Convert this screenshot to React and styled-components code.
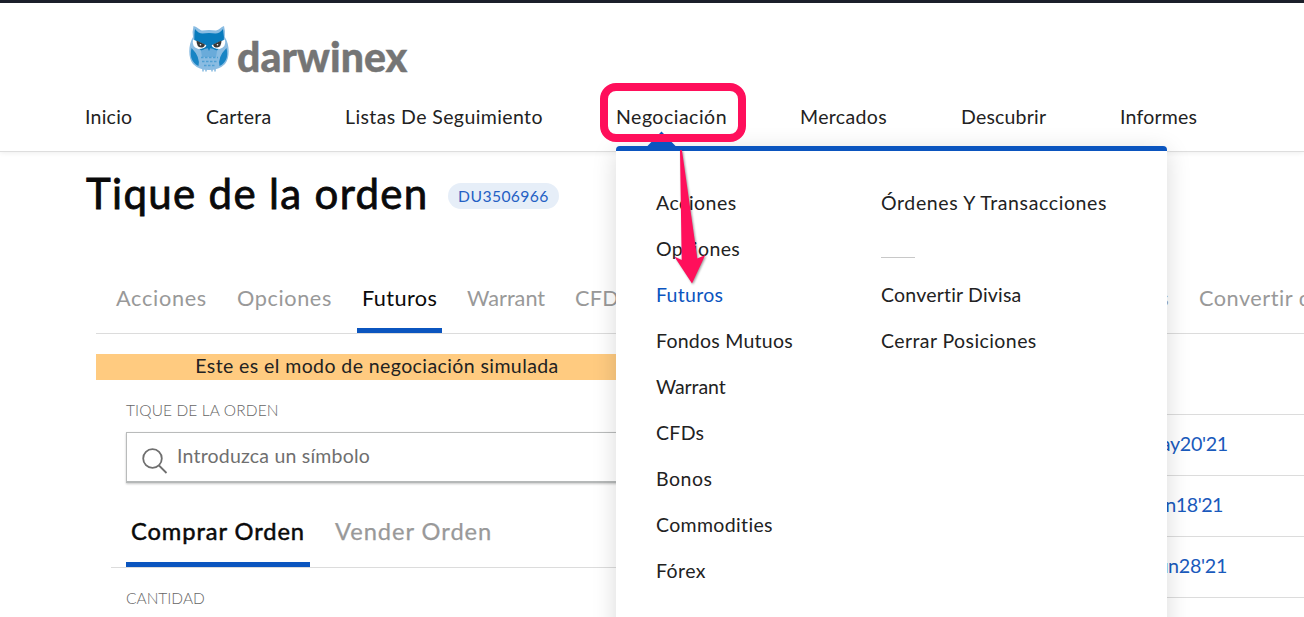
import React from "react";
import styled, { createGlobalStyle } from "styled-components";

const blue = "#0b55bf";
const pink = "#ff0f5b";

const GlobalStyle = createGlobalStyle`
  * { box-sizing: border-box; }
  html, body { margin: 0; height: 100%; overflow: hidden; background: #fff; }
  body { font-family: Lato, "Open Sans", sans-serif; color: #222; }
`;

const Page = styled.div`
  position: relative;
  width: 1304px;
  height: 617px;
  overflow: hidden;
  background: #fff;
`;

const Header = styled.header`
  height: 152px;
  border-top: 3px solid #1b1f2a;
  border-bottom: 1px solid #dedede;
  box-shadow: 0 1px 5px rgba(0, 0, 0, 0.07);
`;

const Brand = styled.div`
  display: flex;
  height: 88px;
  padding: 21px 0 0 187px;
`;

const BrandName = styled.span`
  margin: 8px 0 0 6px;
  font-size: 41px;
  line-height: 50px;
  font-weight: 900;
  letter-spacing: ${(p) => p.$ls}px;
  color: #757575;
  -webkit-text-stroke: 0.4px #757575;
`;

const Nav = styled.nav`
  display: grid;
  grid-template-columns: 121px 139px 271px 184px 161px 159px auto;
  padding-left: 85px;
`;

const NavLink = styled.a`
  font-size: 19.5px;
  line-height: 52px;
  white-space: nowrap;
  letter-spacing: ${(p) => p.$ls}px;
`;

const TitleRow = styled.div`
  display: flex;
  align-items: center;
  height: 87px;
  padding: 0 0 5px 86px;
`;

const Title = styled.h1`
  margin: 0;
  width: 362px;
  font-size: 42px;
  line-height: 50px;
  font-weight: 400;
  letter-spacing: ${(p) => p.$ls}px;
  white-space: nowrap;
  color: #0a0a0a;
  -webkit-text-stroke: 0.8px #0a0a0a;
`;

const Account = styled.span`
  width: 111px;
  height: 26px;
  margin-top: 5px;
  border-radius: 13px;
  background: #e6eef8;
  color: #2460c4;
  font-size: 15.7px;
  line-height: 26px;
  text-align: center;
  letter-spacing: ${(p) => p.$ls}px;
`;

const Tabs = styled.div`
  display: grid;
  grid-template-columns: 121px 120px 110px 108px 120px 504px auto;
  height: 95px;
  margin-left: 96px;
  padding-left: 20px;
  border-bottom: 1px solid #dcdcdc;
`;

const Tab = styled.div`
  justify-self: ${(p) => (p.$end ? "end" : "start")};
  padding: ${(p) => (p.$active ? "0 5px" : p.$end ? "0 30px 0 0" : "0")};
  height: 94px;
  border-bottom: 5px solid ${(p) => (p.$active ? blue : "transparent")};
  font-size: 21.7px;
  line-height: 118px;
  white-space: nowrap;
  letter-spacing: ${(p) => p.$ls}px;
  color: ${(p) => (p.$active ? "#0a0a0a" : "#999")};
`;

const Columns = styled.div`
  display: flex;
  padding: 20px 0 0 96px;
`;

const Ticket = styled.section`
  width: 562px;
`;

const Banner = styled.div`
  height: 26px;
  background: #ffcb80;
  font-size: 19.5px;
  line-height: 24px;
  text-align: center;
  letter-spacing: ${(p) => p.$ls}px;
`;

const Label = styled.div`
  margin-left: 30px;
  padding-top: ${(p) => p.$top}px;
  font-size: 15.5px;
  line-height: 20px;
  font-weight: 300;
  letter-spacing: ${(p) => p.$ls}px;
  color: #666;
`;

const Search = styled.div`
  display: flex;
  height: 51px;
  margin: 12px 0 0 30px;
  border: 1px solid #b9bbbb;
  border-bottom: 2px solid #b5b8b8;
  box-shadow: 0 1px 2px rgba(0, 0, 0, 0.22);
  padding: 15px 0 0 15px;
  color: #6f6f6f;
  font-size: 19.5px;
  line-height: 16px;
  letter-spacing: ${(p) => p.$ls}px;

  svg { margin-right: 9px; flex: none; }
`;

const SideTabs = styled.div`
  display: flex;
  gap: 25px;
  height: 85px;
  margin-left: 15px;
  padding-left: 15px;
  border-bottom: 1px solid #dcdcdc;
`;

const SideTab = styled.div`
  width: 184px;
  height: 84px;
  padding-left: ${(p) => (p.$active ? 5 : 0)}px;
  border-bottom: 5px solid ${(p) => (p.$active ? blue : "transparent")};
  font-size: 23.7px;
  line-height: 97px;
  white-space: nowrap;
  letter-spacing: ${(p) => p.$ls}px;
  color: ${(p) => (p.$active ? "#0a0a0a" : "#999")};
  -webkit-text-stroke: ${(p) => (p.$active ? 0.5 : 0.25)}px currentColor;
`;

const Contracts = styled.section`
  flex: 1;
  padding-top: 60px;
`;

const Contract = styled.div`
  height: 61px;
  border-top: 1px solid #dcdcdc;
  padding-right: ${(p) => p.$right}px;
  text-align: right;
  font-size: 19.7px;
  line-height: 57px;
  letter-spacing: ${(p) => p.$ls}px;
  color: #1a5abc;
`;

const Menu = styled.div`
  position: absolute;
  left: 616px;
  top: 146px;
  display: grid;
  grid-template-columns: 225px auto;
  align-content: start;
  width: 551px;
  height: 500px;
  padding: 29px 0 0 40px;
  border-top: 5px solid ${blue};
  border-radius: 4px 4px 0 0;
  background: #fff;
  box-shadow: 0 5px 25px rgba(0, 0, 0, 0.15);
`;

const MenuColumn = styled.div`
  display: flex;
  flex-direction: column;
`;

const MenuItem = styled.a`
  height: 46px;
  font-size: 19.5px;
  line-height: 46px;
  white-space: nowrap;
  letter-spacing: ${(p) => p.$ls}px;
  color: ${(p) => (p.$active ? blue : "#222")};
`;

const Divider = styled.div`
  width: 34px;
  height: 32px;
  margin-bottom: 14px;
  border-bottom: 1px solid #c8c8c8;
`;

const Overlay = styled.svg`
  position: absolute;
  left: 590px;
  top: 75px;
`;

const Owl = () => (
  <svg width="44" height="50" viewBox="0 0 44 50">
    <path d="M16 43v4.500M19 43v4.500M25 43v4.500M28 43v4.500" stroke="#8abce2" strokeWidth="1.600" />
    <path d="M6.500 2c4 1 6 4 8.500 4.500q7-1.200 14 0C32 6 34 3 37 2q1.500 5 .8 11C43 21 43 34 38 40q-6 6-16 6T6 40C1 34 1 21 6 13Q5 8 6.500 2z" fill="#8abce2" />
    <path d="M8 5q3.500 4.500 7.500 4.500 6.500-1 13 0 4 0 7.500-4.500 1.500 8 .5 14L30 26.500H14L7.500 19Q7 10 8 5z" fill="#087bbd" />
    <path d="M14 27q8-6 16 0l-1 6H15z" fill="#6aabda" />
    <path d="M4.500 24q9 9 7 18-10-5-7-18zM39.500 24q-9 9-7 18 10-5 7-18z" fill="#1884c4" />
    <path d="M6 15.500Q4.500 23.500 11.500 25q6.500 0 8-3.800zM38 15.500Q39.500 23.500 32.500 25q-6.500 0-8-3.800z" fill="#fff" />
    <path d="M9.500 16.500l8.500 3.900q-1 3.200-4 3.200-4.500-.6-4.500-7.100zM34.500 16.500L26 20.400q1 3.200 4 3.200 4.500-.6 4.500-7.100z" fill="#383838" />
    <circle cx="13.500" cy="20.800" r=".8" fill="#fff" />
    <circle cx="30.500" cy="20.800" r=".8" fill="#fff" />
    <path d="M19 20h6l-3 7z" fill="#087bbd" />
    <path d="M14 33.500h17M15 37.500h15M17 41.500h11" stroke="#4f9fd3" strokeWidth="1.400" strokeDasharray="2.500 1.500" />
  </svg>
);

const nav = [
  ["Inicio", 0.25], ["Cartera", 0.25], ["Listas De Seguimiento", 0.4],
  ["Negociación", 0.5], ["Mercados", 0.35], ["Descubrir", 0.2], ["Informes", 0.2],
];

const tabs = [
  ["Acciones", 0.7], ["Opciones", 0.6], ["Futuros", 0.4],
  ["Warrant", 0], ["CFDs", 0.3], ["Fondos Mutuos", 0.3], ["Convertir divisa", 0.5],
];

const products = [
  ["Acciones", 0.5], ["Opciones", 0.4], ["Futuros", 0.3], ["Fondos Mutuos", 0.25],
  ["Warrant", -0.1], ["CFDs", 0.3], ["Bonos", 0.5], ["Commodities", 0.35], ["Fórex", 0.4],
];

const contracts = [["May20'21", 76, -0.3], ["Jun18'21", 81, -0.5], ["Jun28'21", 77, -0.3]];

export default function App() {
  return (
    <Page>
      <GlobalStyle />
      <Header>
        <Brand>
          <Owl />
          <BrandName $ls={0}>darwinex</BrandName>
        </Brand>
        <Nav>
          {nav.map(([t, ls]) => <NavLink key={t} $ls={ls}>{t}</NavLink>)}
        </Nav>
      </Header>
      <TitleRow>
        <Title $ls={1.33}>Tique de la orden</Title>
        <Account $ls={0.4}>DU3506966</Account>
      </TitleRow>
      <Tabs>
        {tabs.map(([t, ls], i) => (
          <Tab key={t} $ls={ls} $active={i === 2} $end={i === 5}>{t}</Tab>
        ))}
      </Tabs>
      <Columns>
        <Ticket>
          <Banner $ls={0.41}>Este es el modo de negociación simulada</Banner>
          <Label $top={20} $ls={0.12}>TIQUE DE LA ORDEN</Label>
          <Search $ls={0.2}>
            <svg width="26" height="27" viewBox="0 0 26 27" fill="none" stroke="#6f6f6f" strokeWidth="1.800">
              <circle cx="10.500" cy="10.500" r="9.300" />
              <path d="M17 17.500l7.500 7.500" />
            </svg>
            Introduzca un símbolo
          </Search>
          <SideTabs>
            <SideTab $active $ls={0.92}>Comprar Orden</SideTab>
            <SideTab $ls={0.95}>Vender Orden</SideTab>
          </SideTabs>
          <Label $top={20} $ls={0}>CANTIDAD</Label>
        </Ticket>
        <Contracts>
          {contracts.map(([t, right, ls]) => (
            <Contract key={t} $right={right} $ls={ls}>{t}</Contract>
          ))}
          <Contract />
        </Contracts>
      </Columns>
      <Menu>
        <MenuColumn>
          {products.map(([t, ls]) => (
            <MenuItem key={t} $ls={ls} $active={t === "Futuros"}>{t}</MenuItem>
          ))}
        </MenuColumn>
        <MenuColumn>
          <MenuItem $ls={0.62}>Órdenes Y Transacciones</MenuItem>
          <Divider />
          <MenuItem $ls={0.2}>Convertir Divisa</MenuItem>
          <MenuItem $ls={0.42}>Cerrar Posiciones</MenuItem>
        </MenuColumn>
      </Menu>
      <Overlay width="170" height="220" viewBox="0 0 170 220">
        <path d="M57 71.500L71.500 56.500 86 71.500z" fill={blue} />
        <rect x="14" y="12" width="138" height="51" rx="12" fill="none" stroke={pink} strokeWidth="8" />
        <path d="M90 75.500q1-1.500 2 0L107.300 183.500 115.300 180 102 208.500 84.300 181.500 91.700 185z" fill={pink} style={{ filter: "drop-shadow(1px 1px 1px rgba(0,0,0,.4))" }} />
      </Overlay>
    </Page>
  );
}
